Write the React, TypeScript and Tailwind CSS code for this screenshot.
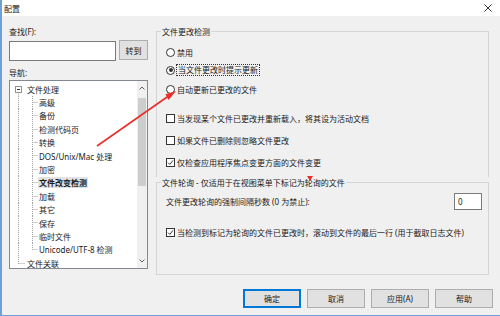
import React from 'react'

type Kind = 'root' | 'child' | 'child-last' | 'root-last'

const treeItems: { label: string; kind: Kind; selected?: boolean }[] = [
  { label: '文件处理', kind: 'root' },
  { label: '高级', kind: 'child' },
  { label: '备份', kind: 'child' },
  { label: '检测代码页', kind: 'child' },
  { label: '转换', kind: 'child' },
  { label: 'DOS/Unix/Mac 处理', kind: 'child' },
  { label: '加密', kind: 'child' },
  { label: '文件改变检测', kind: 'child', selected: true },
  { label: '加载', kind: 'child' },
  { label: '其它', kind: 'child' },
  { label: '保存', kind: 'child' },
  { label: '临时文件', kind: 'child' },
  { label: 'Unicode/UTF-8 检测', kind: 'child-last' },
  { label: '文件关联', kind: 'root-last' },
]

function TreeLines({ kind }: { kind: Kind }) {
  const dot = { stroke: '#a0a0a0', strokeWidth: 1, strokeDasharray: '1 1' }
  if (kind === 'root') {
    return (
      <svg width="17" height="13.4" viewBox="0 0 17 13.4" className="shrink-0">
        <rect x="5.5" y="3.5" width="6" height="6" fill="white" stroke="#919191" strokeWidth="1" />
        <line x1="7" y1="6.5" x2="10" y2="6.5" stroke="#333" strokeWidth="1" />
        <line x1="8.5" y1="9.5" x2="8.5" y2="13.4" {...dot} />
      </svg>
    )
  }
  if (kind === 'root-last') {
    return (
      <svg width="17" height="13.4" viewBox="0 0 17 13.4" className="shrink-0">
        <line x1="8.5" y1="0" x2="8.5" y2="6.7" {...dot} />
        <line x1="8.5" y1="6.5" x2="15" y2="6.5" {...dot} />
      </svg>
    )
  }
  return (
    <svg width="29" height="13.4" viewBox="0 0 29 13.4" className="shrink-0">
      <line x1="8.5" y1="0" x2="8.5" y2="13.4" {...dot} />
      <line x1="22.5" y1="0" x2="22.5" y2={kind === 'child-last' ? 6.7 : 13.4} {...dot} />
      <line x1="22.5" y1="6.5" x2="28" y2="6.5" {...dot} />
    </svg>
  )
}

function Radio({ checked }: { checked?: boolean }) {
  return (
    <span className="w-[9px] h-[9px] rounded-full border border-[#333] bg-white flex items-center justify-center shrink-0">
      {checked && <span className="w-[4px] h-[4px] rounded-full bg-[#333]" />}
    </span>
  )
}

function Checkbox({ checked }: { checked?: boolean }) {
  return (
    <span className="w-[9px] h-[9px] border border-[#333] bg-white flex items-center justify-center shrink-0">
      {checked && (
        <svg width="7" height="7" viewBox="0 0 7 7">
          <path d="M1 3.6 L2.8 5.4 L6 1.4" fill="none" stroke="#333" strokeWidth="1" />
        </svg>
      )}
    </span>
  )
}

function Button({ label, primary }: { label: string; primary?: boolean }) {
  return (
    <div
      className={
        primary
          ? 'w-[58px] h-[19px] flex items-center justify-center bg-[#e1e1e1] border border-[#0078d7] shadow-[inset_0_0_0_1px_#0078d7]'
          : 'w-[58px] h-[19px] flex items-center justify-center bg-[#e1e1e1] border border-[#adadad]'
      }
    >
      {label}
    </div>
  )
}

export default function App() {
  return (
    <div className="relative w-[500px] h-[316px] overflow-hidden flex flex-col bg-[#f0f0f0] border-l-2 border-b border-[#6d9fd9] text-[8px] leading-[11px] text-[#1a1a1a] font-['Noto_Sans','Noto_Sans_CJK_SC',sans-serif]">
      {/* Title bar */}
      <div className="h-[16px] bg-white flex items-center justify-between shrink-0">
        <span className="pl-[2px]">配置</span>
        <svg width="8" height="8" viewBox="0 0 8 8" className="mr-[8px]">
          <path d="M0.5 0.5 L7.5 7.5 M7.5 0.5 L0.5 7.5" stroke="#333" strokeWidth="1" />
        </svg>
      </div>

      {/* Body */}
      <div className="flex-1 flex flex-col">
        <div className="flex">
          {/* Left column */}
          <div className="ml-[7px] w-[139px] flex flex-col">
            <span className="mt-[10px]">查找(F):</span>
            <div className="mt-[3px] flex items-start gap-[3px]">
              <div className="w-[107px] h-[20px] mt-[1px] bg-white border border-[#7a7a7a]" />
              <div className="w-[29px] h-[20px] flex items-center justify-center bg-[#e1e1e1] border border-[#adadad]">
                转到
              </div>
            </div>
            <span className="mt-[6px]">导航:</span>
            <div className="mt-[2px] h-[189px] bg-white border border-[#828790] flex">
              <div className="flex-1 pt-[1.5px] flex flex-col">
                {treeItems.map((it) => (
                  <div key={it.label} className="h-[13.4px] flex items-center">
                    <TreeLines kind={it.kind} />
                    <span
                      className={
                        it.selected
                          ? 'px-[1px] -ml-[1px] font-bold bg-[#e3e3e3] whitespace-nowrap'
                          : 'whitespace-nowrap'
                      }
                    >
                      {it.label}
                    </span>
                  </div>
                ))}
              </div>
              {/* Scrollbar */}
              <div className="w-[10px] bg-[#f0f0f0] flex flex-col">
                <div className="h-[14px] flex items-center justify-center">
                  <svg width="6" height="4" viewBox="0 0 6 4">
                    <path d="M0.5 3.5 L3 1 L5.5 3.5" fill="none" stroke="#606060" strokeWidth="1" />
                  </svg>
                </div>
                <div className="flex-1 flex flex-col">
                  <div className="mt-[3px] mx-[1px] h-[88px] bg-[#cdcdcd]" />
                </div>
                <div className="h-[14px] flex items-center justify-center">
                  <svg width="6" height="4" viewBox="0 0 6 4">
                    <path d="M0.5 0.5 L3 3 L5.5 0.5" fill="none" stroke="#606060" strokeWidth="1" />
                  </svg>
                </div>
              </div>
            </div>
          </div>

          {/* Right column */}
          <div className="ml-[8px] w-[333px] flex flex-col">
            <fieldset className="mt-[10px] border border-b-0 border-[#d5d5d5] h-[151px]">
              <legend className="ml-[4px] px-[1px]">文件更改检测</legend>
              <div className="pl-[9px] flex flex-col">
                <div className="mt-[9px] h-[12px] flex items-center gap-[2px]">
                  <Radio />
                  <span>禁用</span>
                </div>
                <div className="mt-[6px] h-[12px] flex items-center gap-[1px]">
                  <Radio checked />
                  <span className="px-[1px] border border-dotted border-[#333] leading-[10px]">当文件更改时提示更新</span>
                </div>
                <div className="mt-[7px] h-[12px] flex items-center gap-[2px]">
                  <Radio />
                  <span>自动更新已更改的文件</span>
                </div>
                <div className="mt-[17px] h-[12px] flex items-center gap-[2px]">
                  <Checkbox />
                  <span>当发现某个文件已更改并重新载入，将其设为活动文档</span>
                </div>
                <div className="mt-[10px] h-[12px] flex items-center gap-[2px]">
                  <Checkbox />
                  <span>如果文件已删除则忽略文件更改</span>
                </div>
                <div className="mt-[10px] h-[12px] flex items-center gap-[2px]">
                  <Checkbox checked />
                  <span>仅检查应用程序焦点变更方面的文件变更</span>
                </div>
              </div>
            </fieldset>
            <fieldset className="border border-[#d5d5d5] h-[98px]">
              <legend className="ml-[4px] px-[1px]">文件轮询 - 仅适用于在视图菜单下标记为轮询的文件</legend>
              <div className="pl-[9px] pr-[6px] flex flex-col">
                <div className="mt-[5px] h-[17px] flex items-center justify-between">
                  <span>文件更改轮询的强制间隔秒数 (0 为禁止):</span>
                  <div className="w-[28px] h-[17px] bg-white border border-[#7a7a7a] flex items-center pl-[3px]">0</div>
                </div>
                <div className="mt-[16px] h-[12px] flex items-center gap-[2px]">
                  <Checkbox checked />
                  <span>当检测到标记为轮询的文件已更改时，滚动到文件的最后一行 (用于截取日志文件)</span>
                </div>
              </div>
            </fieldset>
          </div>
        </div>

        {/* Buttons */}
        <div className="mt-[14px] flex justify-end gap-[6px] -mr-[0px] pr-[7px]">
          <Button label="确定" primary />
          <Button label="取消" />
          <Button label="应用(A)" />
          <Button label="帮助" />
        </div>
      </div>

      {/* Red annotation arrow and marker */}
      <svg className="absolute left-0 top-0 pointer-events-none" width="500" height="316" viewBox="0 0 500 316">
        <line x1="95" y1="146" x2="168" y2="95" stroke="#e8302a" strokeWidth="1.6" />
        <polygon points="174,91 166.6,100 163.5,94.2" fill="#e8302a" />
        <polygon points="305,176 311,176 308,181" fill="#e8302a" />
      </svg>
    </div>
  )
}
